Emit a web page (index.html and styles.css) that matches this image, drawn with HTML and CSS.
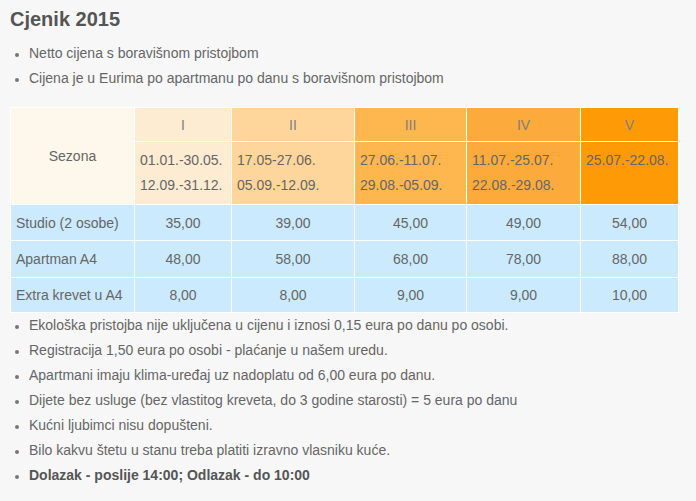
FILE: index.html
```html
<!DOCTYPE html>
<html lang="hr">
<head>
<meta charset="utf-8">
<title>Cjenik 2015</title>
<link rel="stylesheet" href="styles.css">
</head>
<body>
<div class="page">
  <h2 class="title">Cjenik 2015</h2>
  <ul class="list top-list">
    <li>Netto cijena s boravišnom pristojbom</li>
    <li>Cijena je u Eurima po apartmanu po danu s boravišnom pristojbom</li>
  </ul>
  <table class="prices">
    <colgroup>
      <col class="c1"><col class="c2"><col class="c3"><col class="c4"><col class="c5"><col class="c6">
    </colgroup>
    <tr class="h1">
      <td rowspan="2" class="season">Sezona</td>
      <td class="s1">I</td>
      <td class="s2">II</td>
      <td class="s3">III</td>
      <td class="s4">IV</td>
      <td class="s5">V</td>
    </tr>
    <tr class="h2">
      <td class="s1">01.01.-30.05.<br>12.09.-31.12.</td>
      <td class="s2">17.05-27.06.<br>05.09.-12.09.</td>
      <td class="s3">27.06.-11.07.<br>29.08.-05.09.</td>
      <td class="s4">11.07.-25.07.<br>22.08.-29.08.</td>
      <td class="s5">25.07.-22.08.</td>
    </tr>
    <tr class="row r1">
      <td class="name">Studio (2 osobe)</td><td>35,00</td><td>39,00</td><td>45,00</td><td>49,00</td><td>54,00</td>
    </tr>
    <tr class="row r2">
      <td class="name">Apartman A4</td><td>48,00</td><td>58,00</td><td>68,00</td><td>78,00</td><td>88,00</td>
    </tr>
    <tr class="row r3">
      <td class="name">Extra krevet u A4</td><td>8,00</td><td>8,00</td><td>9,00</td><td>9,00</td><td>10,00</td>
    </tr>
  </table>
  <ul class="list bottom-list">
    <li>Ekološka pristojba nije uključena u cijenu i iznosi 0,15 eura po danu po osobi.</li>
    <li>Registracija 1,50 eura po osobi - plaćanje u našem uredu.</li>
    <li>Apartmani imaju klima-uređaj uz nadoplatu od 6,00 eura po danu.</li>
    <li>Dijete bez usluge (bez vlastitog kreveta, do 3 godine starosti) = 5 eura po danu</li>
    <li>Kućni ljubimci nisu dopušteni.</li>
    <li>Bilo kakvu štetu u stanu treba platiti izravno vlasniku kuće.</li>
    <li><strong>Dolazak - poslije 14:00; Odlazak - do 10:00</strong></li>
  </ul>
</div>
</body>
</html>
```
FILE: styles.css
```css
html, body {
  margin: 0;
  padding: 0;
  background: #f7f7f7;
}
body {
  font-family: "Liberation Sans", Arial, sans-serif;
  font-size: 14px;
  color: #666;
}
.page {
  padding: 6px 10px 0 10px;
}
.title {
  margin: 0;
  font-size: 20px;
  line-height: 26px;
  font-weight: bold;
  color: #555;
}
.list {
  margin: 0;
  padding-left: 19px;
  list-style: disc;
  line-height: 25px;
}
.list li::marker {
  color: #777;
  font-size: 12px;
}
.top-list {
  margin-top: 9px;
  margin-bottom: 16px;
}
.bottom-list {
  margin-top: 0;
}
.bottom-list strong {
  color: #555;
}
.prices {
  width: 668px;
  border-collapse: collapse;
  table-layout: fixed;
  font-size: 14px;
  color: #666;
}
.c1 { width: 124px; }
.c2 { width: 97px; }
.c3 { width: 123px; }
.c4 { width: 112px; }
.c5 { width: 114px; }
.c6 { width: 98px; }
.prices td {
  border: 1px solid #fff;
  padding: 0 5px;
}
.h1 td {
  height: 33px;
  text-align: center;
  color: #808080;
}
.h1 td.season {
  background: #fef7ec;
  color: #666;
}
.h2 td {
  height: 51px;
  padding-top: 6px;
  padding-bottom: 5px;
  line-height: 25px;
  vertical-align: top;
  text-align: left;
}
.s1 { background: #fdebd2; }
.s2 { background: #fed69b; }
.s3 { background: #feb64f; }
.s4 { background: #fdaa3c; }
.s5 { background: #fe9a06; }
.row td {
  background: #cceafd;
  text-align: center;
  height: 35px;
}
.row td.name {
  text-align: left;
}
.r2 td { height: 36px; }
.r3 td { height: 34px; }
```
